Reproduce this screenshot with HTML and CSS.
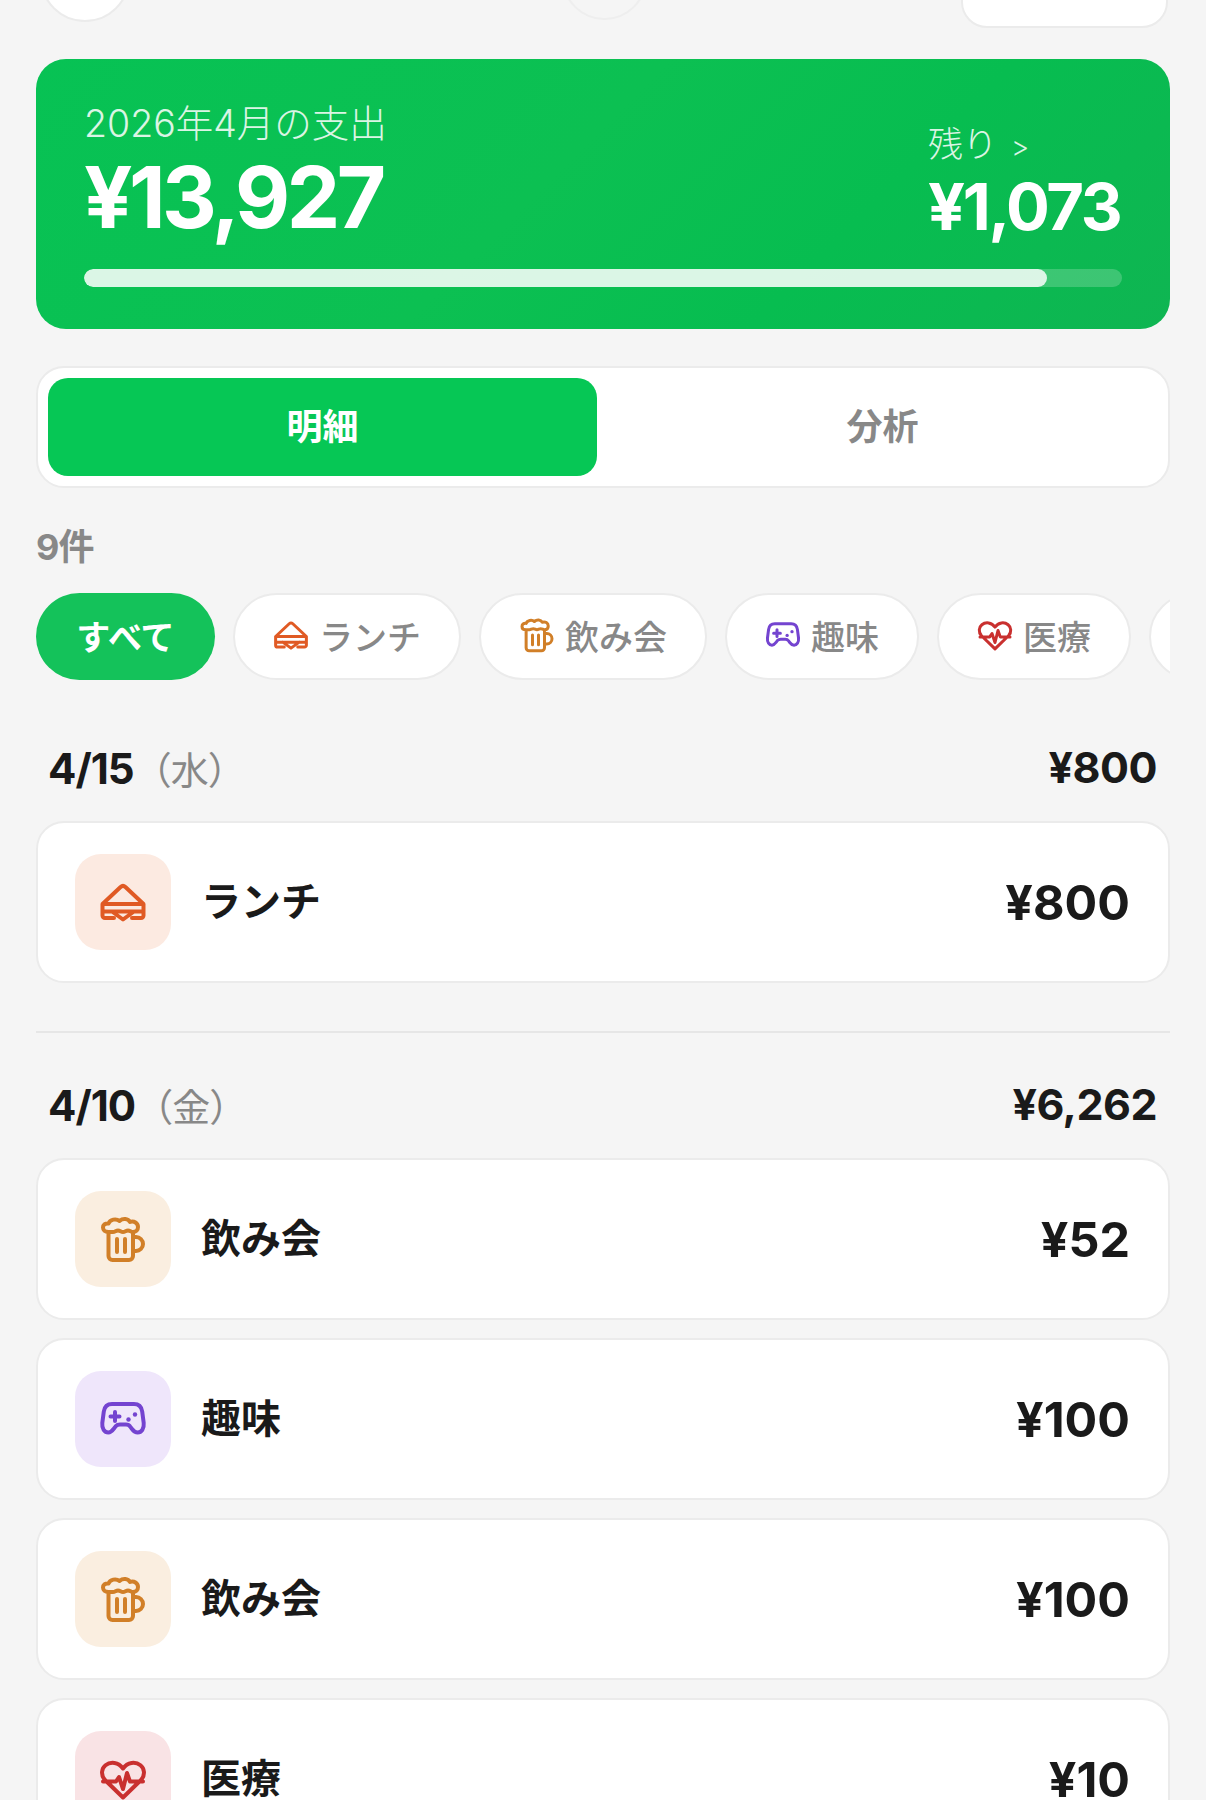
FILE: index.html
```html
<!DOCTYPE html>
<html lang="ja">

<head>
    <meta charset="UTF-8">
    <link rel="stylesheet" href="styles.css">
    <title>支出</title>
</head>

<body>
    <svg class="defs" width="0" height="0">
        <symbol id="i-lunch" viewBox="0 0 48 48">
            <path d="M3.5 26 21.6 9a3.6 3.6 0 0 1 4.8 0L44.500 26M3.500 26h41v11.500a2.500 2.500 0 0 1-2.500 2.500H33M15 40H6a2.500 2.500 0 0 1-2.500-2.500V26M3.500 33.500h41M13 33.500l11 8 11-8" />
        </symbol>
        <symbol id="i-beer" viewBox="0 0 48 48">
            <path d="M9.500 17v24a4 4 0 0 0 4 4H30a4 4 0 0 0 4-4V17M34 22h3a7 7 0 0 1 0 14h-3M18 24v13M26 24v13M9.500 17C6 17 4 15 4 12.500S6 8 9.500 8.500C11 4.500 17 3 20.500 6 24 3 29 3.500 31 7c4-1.500 8 1 8 5 0 3-2 5-5 5-2 0-3-1.500-5-1.500s-3 1.500-5 1.500-3-1.500-5-1.500-3 1.500-5 1.500z" />
        </symbol>
        <symbol id="i-hobby" viewBox="0 0 48 48">
            <path d="M13 9h22c4.500 0 7.500 3 8.200 7.500l1.500 11.500c.6 5.500-2.200 9.500-6 9.500-2.700 0-4.200-1.500-5.700-3.500l-1.800-2.400C30.200 30 29 29.500 27 29.500h-6c-2 0-3.200.5-4.200 1.600L15 33.500c-1.500 2-3 4-5.700 4-3.800 0-6.600-4-6-9.500l1.500-11.500C5.500 12 8.500 9 13 9zM16 17v9M11.500 21.500h9" />
            <circle class="dot" cx="29.500" cy="24.500" r="2.200" />
            <circle class="dot" cx="36" cy="19.500" r="2.200" />
        </symbol>
        <symbol id="i-medical" viewBox="0 0 48 48">
            <path d="M24 42.500 6 25C1.500 20 2.500 13.500 6.500 10.300 11.500 6.300 19.500 7 24 13.500 28.500 7 36.500 6.300 41.500 10.300c4 3.200 5 9.700.5 14.700zM4 26.500h13l3-4.500 4 12 4-16 3 8.500h13" />
        </symbol>
    </svg>

    <div id="page">
        <div class="topbar">
            <div class="top-round"></div>
            <div class="top-round top-round-mid"></div>
            <div class="top-box"></div>
        </div>

        <div class="hero">
            <div class="hero-row">
                <div>
                    <div class="hero-label hero-label-main">2026年4月の支出</div>
                    <div class="hero-total">¥13,927</div>
                </div>
                <div class="hero-right">
                    <div class="hero-label">残り<span class="hero-arrow">&gt;</span></div>
                    <div class="hero-rest">¥1,073</div>
                </div>
            </div>
            <div class="progress">
                <div class="progress-fill" style="width: 92.8%;"></div>
            </div>
        </div>

        <div class="tabs">
            <div class="tab tab-on">明細</div>
            <div class="tab">分析</div>
        </div>

        <div class="count">9件</div>

        <div class="chips">
            <div class="chip chip-on">すべて</div>
            <div class="chip"><svg class="chip-icon c-lunch"><use href="#i-lunch" /></svg>ランチ</div>
            <div class="chip"><svg class="chip-icon c-beer"><use href="#i-beer" /></svg>飲み会</div>
            <div class="chip"><svg class="chip-icon c-hobby"><use href="#i-hobby" /></svg>趣味</div>
            <div class="chip"><svg class="chip-icon c-medical"><use href="#i-medical" /></svg>医療</div>
            <div class="chip chip-cut"></div>
        </div>

        <div class="day-head">
            <div class="day-date">4/15<span class="day-week">（水）</span></div>
            <div class="day-sum">¥800</div>
        </div>
        <div class="list">
            <div class="item">
                <div class="item-icon bg-lunch"><svg class="c-lunch"><use href="#i-lunch" /></svg></div>
                <div class="item-name">ランチ</div>
                <div class="item-price">¥800</div>
            </div>
        </div>

        <hr class="divider">

        <div class="day-head">
            <div class="day-date">4/10<span class="day-week">（金）</span></div>
            <div class="day-sum">¥6,262</div>
        </div>
        <div class="list">
            <div class="item">
                <div class="item-icon bg-beer"><svg class="c-beer"><use href="#i-beer" /></svg></div>
                <div class="item-name">飲み会</div>
                <div class="item-price">¥52</div>
            </div>
            <div class="item">
                <div class="item-icon bg-hobby"><svg class="c-hobby"><use href="#i-hobby" /></svg></div>
                <div class="item-name">趣味</div>
                <div class="item-price">¥100</div>
            </div>
            <div class="item">
                <div class="item-icon bg-beer"><svg class="c-beer"><use href="#i-beer" /></svg></div>
                <div class="item-name">飲み会</div>
                <div class="item-price">¥100</div>
            </div>
            <div class="item">
                <div class="item-icon bg-medical"><svg class="c-medical"><use href="#i-medical" /></svg></div>
                <div class="item-name">医療</div>
                <div class="item-price">¥10</div>
            </div>
        </div>
    </div>
</body>

</html>
```

FILE: styles.css
```css
@charset "UTF-8";

/* ========BASIC======== */
html,
body {
    height: 1800px;
    overflow: hidden;
}

body {
    margin: 0;
    padding: 0;
    font-family: Inter, "Noto Sans CJK JP", sans-serif;
    color: #1a1a1a;
    background: #f5f5f5;
}

.defs {
    position: absolute;
}

#page {
    display: flex;
    flex-direction: column;
    padding: 0 36px;
}

svg {
    fill: none;
    stroke: currentColor;
    stroke-width: 4;
    stroke-linecap: round;
    stroke-linejoin: round;
}

svg .dot {
    fill: currentColor;
    stroke: none;
}


/* ========TOP BAR======== */
.topbar {
    display: flex;
    height: 28px;
    align-items: flex-end;
    overflow: hidden;
    padding: 0 2px 0 4px;
}

.top-round {
    flex: none;
    width: 90px;
    height: 90px;
    margin-bottom: 6px;
    border: 2px solid #ebebeb;
    border-radius: 50%;
    background: #fff;
    box-sizing: border-box;
}

.top-round-mid {
    margin: 0 auto 8px 432px;
    width: 85px;
    height: 85px;
    border-color: #eeeeee;
    background: #f5f5f5;
}

.top-box {
    flex: none;
    width: 207px;
    height: 80px;
    border: 2px solid #ebebeb;
    border-radius: 26px;
    background: #fff;
    box-sizing: border-box;
}


/* ========HERO======== */
.hero {
    height: 270px;
    margin-top: 31px;
    padding: 43px 48px 0;
    border-radius: 30px;
    color: #fff;
    background: linear-gradient(135deg, #07c254 0%, #0cc052 45%, #07bd50 70%, #0fb552 100%);
    box-sizing: border-box;
}

.hero-row {
    display: flex;
    justify-content: space-between;
    height: 167px;
}

.hero-label {
    font-size: 35px;
    font-weight: 300;
    line-height: 44px;
    opacity: 0.85;
    letter-spacing: -0.5px;
}

.hero-label-main {
    font-size: 37.500px;
    letter-spacing: 0;
}

.hero-total {
    margin-top: 10px;
    font-size: 85px;
    font-weight: 700;
    line-height: 84px;
    letter-spacing: -3.6px;
}

.hero-right {
    width: 194px;
    padding-top: 20px;
    box-sizing: border-box;
}

.hero-arrow {
    margin-left: 14px;
    font-size: 28px;
}

.hero-rest {
    margin-top: 6px;
    font-size: 65px;
    font-weight: 700;
    line-height: 64px;
    letter-spacing: -2.3px;
    white-space: nowrap;
}

.progress {
    height: 18px;
    border-radius: 9px;
    background: rgba(255, 255, 255, 0.2);
    overflow: hidden;
}

.progress-fill {
    height: 100%;
    border-radius: 9px;
    background: rgba(255, 255, 255, 0.82);
}


/* ========TABS======== */
.tabs {
    display: flex;
    height: 122px;
    margin-top: 37px;
    padding: 10px;
    border: 2px solid #ebebeb;
    border-radius: 28px;
    background: #fff;
    box-sizing: border-box;
}

.tab {
    flex: 1;
    display: flex;
    align-items: center;
    justify-content: center;
    padding: 0 0 6px 10px;
    border-radius: 20px;
    font-size: 36px;
    font-weight: 700;
    color: #888;
}

.tab-on {
    flex: none;
    width: 549px;
    padding: 0 0 6px;
    box-sizing: border-box;
    color: #fff;
    background: #06c755;
}


/* ========FILTER======== */
.count {
    margin-top: 37px;
    font-size: 36px;
    font-weight: 700;
    line-height: 44px;
    color: #888;
    letter-spacing: -1px;
}

.chips {
    display: flex;
    gap: 18px;
    margin: 24px 0 16px;
    overflow: hidden;
}

.chip {
    flex: none;
    display: flex;
    align-items: center;
    justify-content: center;
    gap: 10px;
    height: 87px;
    padding: 0 38px 3px;
    border: 2px solid #ebebeb;
    border-radius: 44px;
    font-size: 34px;
    font-weight: 500;
    color: #888;
    background: #fff;
    box-sizing: border-box;
}

.chip-on {
    width: 179px;
    padding: 0 0 3px;
    border: 0;
    font-weight: 700;
    color: #fff;
    background: #14c25a;
}

.chip-cut {
    width: 120px;
}

.chip-icon {
    width: 36px;
    height: 36px;
}


/* ========LIST======== */
.day-head {
    display: flex;
    align-items: center;
    justify-content: space-between;
    margin-top: 45px;
    padding: 0 13px 0 12px;
    height: 52px;
}

.day-date {
    font-size: 42px;
    font-weight: 700;
    letter-spacing: -1px;
}

.day-week {
    font-size: 38px;
    font-weight: 400;
    color: #888;
}

.day-sum {
    font-size: 43px;
    font-weight: 700;
    letter-spacing: -0.5px;
}

.list {
    display: flex;
    flex-direction: column;
    gap: 18px;
    margin-top: 28px;
}

.item {
    flex: none;
    display: flex;
    align-items: center;
    height: 162px;
    padding: 0 38px 0 37px;
    border: 2px solid #ebebeb;
    border-radius: 28px;
    background: #fff;
    box-sizing: border-box;
}

.item-icon {
    flex: none;
    display: flex;
    align-items: center;
    justify-content: center;
    width: 96px;
    height: 96px;
    border-radius: 26px;
}

.item-icon svg {
    width: 48px;
    height: 48px;
}

.item-name {
    margin: 0 0 6px 30px;
    font-size: 40px;
    font-weight: 700;
}

.item-price {
    margin-left: auto;
    font-size: 48.500px;
    font-weight: 700;
}

.divider {
    width: 100%;
    height: 2px;
    margin: 48px 0 0;
    border: 0;
    background: #e6e6e6;
}

.c-lunch {
    color: #e05a24;
}

.c-beer {
    color: #d17f28;
}

.c-hobby {
    color: #7444d0;
}

.c-medical {
    color: #c9302f;
}

.bg-lunch {
    background: #fceae1;
}

.bg-beer {
    background: #faeee0;
}

.bg-hobby {
    background: #efe6fb;
}

.bg-medical {
    background: #f9e3e5;
}
```
